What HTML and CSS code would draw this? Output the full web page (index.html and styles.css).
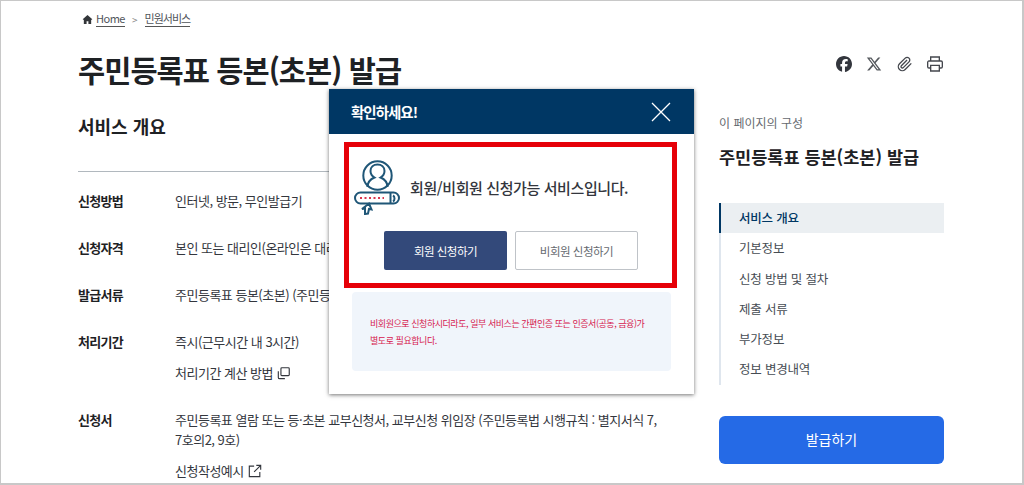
FILE: index.html
```html
<!DOCTYPE html>
<html lang="ko">
  <head>
    <meta charset="UTF-8" />
    <title>주민등록표 등본(초본) 발급</title>
    <link rel="stylesheet" href="styles.css">
  </head>

  <body>
    <div class="frame">
      <div class="page">
        <main class="main">
          <nav class="crumbs">
            <svg class="home-icon" viewBox="0 0 24 24"><path d="M12 2 1.500 11.500 4 13v9h6v-6h4v6h6v-9l2.500-1.500z" /></svg>
            <a class="crumb-en">Home</a>
            <span class="crumb-sep">&gt;</span>
            <a class="crumb-ko">민원서비스</a>
          </nav>
          <h1 class="title">주민등록표 등본(초본) 발급</h1>
          <h2 class="section-title">서비스 개요</h2>

          <div class="info-list">
            <div class="info-row">
              <div class="info-label">신청방법</div>
              <div class="info-value"><p>인터넷, 방문, 무인발급기</p></div>
            </div>
            <div class="info-row">
              <div class="info-label">신청자격</div>
              <div class="info-value"><p>본인 또는 대리인(온라인은 대리인 신청 불가)</p></div>
            </div>
            <div class="info-row">
              <div class="info-label">발급서류</div>
              <div class="info-value"><p>주민등록표 등본(초본) (주민등록법 시행규칙)</p></div>
            </div>
            <div class="info-row">
              <div class="info-label">처리기간</div>
              <div class="info-value">
                <p>즉시(근무시간 내 3시간)</p>
                <p class="info-link">처리기간 계산 방법
                  <svg class="inline-icon" viewBox="0 0 16 16"><path d="M5.500 2h7.500a1 1 0 0 1 1 1v7a1 1 0 0 1-1 1H5.500a1 1 0 0 1-1-1V3a1 1 0 0 1 1-1zM1.500 6v7a1.500 1.500 0 0 0 1.500 1.500h6" /></svg>
                </p>
              </div>
            </div>
            <div class="info-row">
              <div class="info-label">신청서</div>
              <div class="info-value">
                <p>주민등록표 열람 또는 등·초본 교부신청서, 교부신청 위임장 (주민등록법 시행규칙 : 별지서식 7,<br>7호의2, 9호)</p>
                <p class="info-link">신청작성예시
                  <svg class="inline-icon" viewBox="0 0 16 16"><path d="M7 2.500H1.500v12h12V9M9.500 1.500h5v5M14.500 1.500 7 9" /></svg>
                </p>
              </div>
            </div>
          </div>
        </main>

        <aside class="side">
          <div class="tools">
            <svg class="tool" viewBox="0 0 512 512"><path class="solid" d="M512 256C512 114.600 397.400 0 256 0S0 114.600 0 256C0 376 82.700 476.800 194.200 504.500V334.200H141.400V256h52.800V222.300c0-87.100 39.400-127.500 125-127.500c16.200 0 44.200 3.200 55.700 6.400V172c-6-.6-16.500-1-29.600-1c-42 0-58.200 15.900-58.200 57.200V256h83.600l-14.400 78.200H287V510.100C413.800 494.800 512 386.900 512 256z" /></svg>
            <svg class="tool" viewBox="0 0 512 512"><path class="solid-gray" d="M389.200 48h70.600L305.600 224.200 487 464H345L233.700 318.600 106.500 464H35.800L200.700 275.500 26.800 48H172.400L272.900 180.900 389.200 48zM364.400 421.800h39.100L151.100 88h-42L364.400 421.800z" /></svg>
            <svg class="tool" viewBox="0 0 24 24"><path class="line" d="m21.440 11.050-9.190 9.190a6 6 0 0 1-8.490-8.490l8.570-8.570A4 4 0 1 1 18 8.840l-8.590 8.570a2 2 0 0 1-2.830-2.830l8.490-8.480" /></svg>
            <svg class="tool" viewBox="0 0 24 24"><path class="line" d="M5.500 7.500V1.500h13v6M5.500 18H3a2 2 0 0 1-2-2V9.500a2 2 0 0 1 2-2h18a2 2 0 0 1 2 2V16a2 2 0 0 1-2 2h-2.500M5.500 14h13v8.500h-13z" /></svg>
          </div>
          <div class="toc-label">이 페이지의 구성</div>
          <div class="toc-title">주민등록표 등본(초본) 발급</div>
          <ul class="toc">
            <li class="active">서비스 개요</li>
            <li>기본정보</li>
            <li>신청 방법 및 절차</li>
            <li>제출 서류</li>
            <li>부가정보</li>
            <li>정보 변경내역</li>
          </ul>
          <button class="issue-btn">발급하기</button>
        </aside>
      </div>

      <div class="modal">
        <div class="modal-header">
          <span>확인하세요!</span>
          <svg class="close-icon" viewBox="0 0 20 20"><path d="M1 1l18 18M19 1 1 19" /></svg>
        </div>
        <div class="modal-body">
          <div class="red-box">
            <div class="notice">
              <svg class="member-icon" viewBox="0 0 46 55">
                <circle cx="23.500" cy="15.500" r="14.200" />
                <path d="M13.500 27c0-6 3.500-8 7-9.500-2.500-1.500-4-4-4-6.500 0-4 3-6.500 7-6.500s7 2.500 7 6.500c0 2.500-1.500 5-4 6.500 3.500 1.500 7 3.500 7 9.500" />
                <rect x="1" y="32.500" width="44" height="11" rx="5.500" />
                <path d="M36.500 33v10M39 35.500c2 1 2 5 0 6" />
                <path class="dots" d="M6 38h24" />
                <path class="key" d="M11 54v-5.500l-3 .5 7-5.500 2.500 6-2.500-.5-1 4.500z" />
              </svg>
              <span>회원/비회원 신청가능 서비스입니다.</span>
            </div>
            <div class="modal-actions">
              <button class="btn-member">회원 신청하기</button>
              <button class="btn-guest">비회원 신청하기</button>
            </div>
          </div>
          <div class="note">비회원으로 신청하시더라도, 일부 서비스는 간편인증 또는 인증서(공동, 금융)가<br>별도로 필요합니다.</div>
        </div>
      </div>
    </div>
  </body>
</html>
```

FILE: styles.css
```css
* {
  box-sizing: border-box;
}

html,
body {
  margin: 0;
  padding: 0;
  background-color: #ffffff;
}

body {
  font-family: "Noto Sans CJK KR", "Noto Sans", sans-serif;
  color: #1e2124;
}

.frame {
  position: relative;
  width: 1024px;
  height: 485px;
  border: 1px solid #c8c8c8;
  border-width: 1px 2px 2px 1px;
  overflow: hidden;
}

.page {
  display: flex;
  padding-left: 77px;
}

.main {
  width: 593px;
  flex-shrink: 0;
}

.crumbs {
  display: flex;
  align-items: center;
  height: 20px;
  margin-top: 8px;
  padding-left: 4px;
  font-size: 11px;
  color: #50545a;
}

.crumbs a {
  border-bottom: 1px solid #555555;
  line-height: 15px;
}

.crumb-en {
  letter-spacing: -0.500px;
}

.crumb-ko {
  letter-spacing: -1px;
}

.home-icon {
  width: 11px;
  height: 11px;
  margin-right: 3px;
  fill: #33363a;
}

.crumb-sep {
  margin: 0 7px;
  font-size: 10px;
  color: #888888;
}

.title {
  margin: 18px 0 0;
  font-size: 29.500px;
  line-height: 44px;
  font-weight: 700;
  letter-spacing: -0.950px;
  color: #1e2124;
}

.section-title {
  margin: 22px 0 0;
  height: 58px;
  font-size: 18px;
  line-height: 27px;
  font-weight: 700;
}

.info-list {
  border-top: 1px solid #b1b8be;
  padding-top: 19px;
}

.info-row {
  display: flex;
  margin-bottom: 27px;
  font-size: 13px;
  line-height: 20px;
}

.info-label {
  width: 97px;
  flex-shrink: 0;
  font-weight: 700;
  letter-spacing: -0.700px;
}

.info-value {
  flex: 1;
  letter-spacing: -0.500px;
  color: #33363d;
}

.info-value p {
  margin: 0;
}

.info-value .info-link {
  display: flex;
  align-items: center;
  gap: 4px;
  margin-top: 11px;
}

.inline-icon {
  width: 14px;
  height: 14px;
  fill: none;
  stroke: #33363d;
  stroke-width: 1.300;
}

.side {
  width: 225px;
  margin-left: 48px;
  flex-shrink: 0;
}

.tools {
  display: flex;
  justify-content: flex-end;
  gap: 14.500px;
  height: 16px;
  margin-top: 55px;
  padding-right: 1px;
}

.tool {
  width: 16px;
  height: 16px;
}

.tool .solid {
  fill: #33363d;
}

.tool .solid-gray {
  fill: #55585d;
}

.tool .line {
  fill: none;
  stroke: #44474d;
  stroke-width: 2;
}

.toc-label {
  margin-top: 41px;
  font-size: 12px;
  line-height: 20px;
  color: #666a70;
}

.toc-title {
  margin-top: 12px;
  font-size: 17.500px;
  line-height: 24px;
  font-weight: 700;
}

.toc {
  list-style: none;
  margin: 34px 0 0;
  padding: 0;
  border-left: 2px solid #dfe6ee;
}

.toc li {
  height: 30.300px;
  padding-left: 18px;
  font-size: 12.500px;
  line-height: 30px;
  letter-spacing: -0.200px;
  color: #464c53;
}

.toc li.active {
  margin-left: -2px;
  padding-left: 18px;
  border-left: 2px solid #003764;
  background-color: #ebeff2;
  font-weight: 500;
  color: #003764;
}

.issue-btn {
  display: block;
  width: 100%;
  height: 48px;
  margin-top: 31px;
  padding-bottom: 2px;
  border: none;
  border-radius: 6px;
  background-color: #256ae6;
  color: #ffffff;
  font-family: inherit;
  font-size: 14px;
}

/* modal sits over the page */
.modal {
  position: absolute;
  left: 328px;
  top: 88px;
  width: 365px;
  height: 305px;
  background-color: #ffffff;
  box-shadow: 0 1px 4px rgba(0, 0, 0, 0.55);
}

.modal-header {
  display: flex;
  align-items: center;
  justify-content: space-between;
  height: 45px;
  padding: 0 23px 0 22px;
  background-color: #003764;
  color: #ffffff;
  font-size: 14.500px;
  font-weight: 700;
  letter-spacing: -1px;
}

.close-icon {
  width: 20px;
  height: 20px;
  fill: none;
  stroke: #ffffff;
  stroke-width: 1.300;
}

.modal-body {
  padding: 8px 17px 0 15px;
}

.red-box {
  height: 146px;
  padding: 13px 0 0 5px;
  border: 5px solid #e60008;
}

.notice {
  display: flex;
  align-items: center;
  gap: 10px;
  font-size: 15px;
  font-weight: 500;
  letter-spacing: -0.400px;
  color: #33363d;
}

.member-icon {
  width: 46px;
  height: 55px;
  fill: none;
  stroke: #1f5677;
  stroke-width: 2;
}

.member-icon .dots {
  stroke: #d8364f;
  stroke-dasharray: 2 2.500;
}

.member-icon .key {
  fill: #ffffff;
}

.modal-actions {
  display: flex;
  gap: 8px;
  margin-top: 16px;
  margin-left: 30px;
}

.modal-actions button {
  width: 123px;
  height: 39px;
  border-radius: 2px;
  font-family: inherit;
  font-size: 11.500px;
  letter-spacing: -0.500px;
}

.btn-member {
  border: none;
  background-color: #33497a;
  color: #ffffff;
}

.btn-guest {
  border: 1px solid #bfc3c8;
  background-color: #ffffff;
  color: #666a70;
}

.note {
  height: 79px;
  margin: 4px 6px 0 8px;
  padding: 23px 10px 0 18px;
  border-radius: 4px;
  background-color: #f0f5fb;
  color: #d6204e;
  font-size: 9px;
  line-height: 17px;
  letter-spacing: -0.450px;
}
```
